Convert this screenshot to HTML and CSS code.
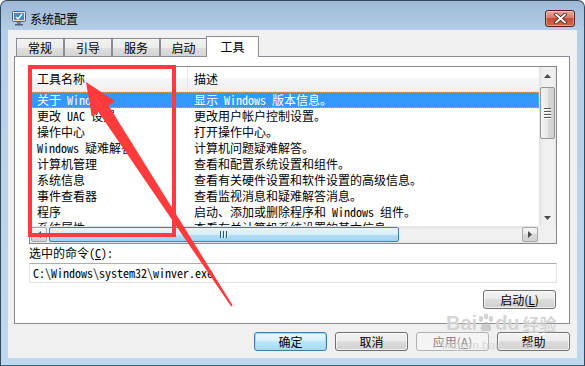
FILE: index.html
```html
<!DOCTYPE html>
<html lang="zh-CN">
<head>
    <meta charset="utf-8">
    <title>系统配置</title>
    <link rel="stylesheet" href="styles.css">
</head>
<body>
    <div class="window">
        <div class="titlebar">
            <svg class="app-icon" width="16" height="16" viewBox="0 0 16 16">
                <rect x="1.5" y="1.5" width="13" height="10" rx="1" fill="#dfe6ee" stroke="#55606c"/>
                <rect x="3" y="3" width="10" height="7" fill="#3b8fd6"/>
                <path d="M5 7l2 2 4-5" fill="none" stroke="#fff" stroke-width="1.3"/>
                <rect x="6" y="12" width="4" height="2" fill="#7b858f"/>
                <rect x="4" y="14" width="8" height="1.5" fill="#55606c"/>
            </svg>
            <span class="title">系统配置</span>
            <div class="close-btn">
                <svg width="13" height="11" viewBox="0 0 13 11">
                    <path d="M2 1.5l9 8M11 1.5l-9 8" stroke="#3c1510" stroke-width="3.6" stroke-linecap="round"/>
                    <path d="M2 1.5l9 8M11 1.5l-9 8" stroke="#fff" stroke-width="2" stroke-linecap="round"/>
                </svg>
            </div>
        </div>

        <div class="client">
            <div class="tabs">
                <div class="tab">常规</div>
                <div class="tab">引导</div>
                <div class="tab">服务</div>
                <div class="tab narrow">启动</div>
                <div class="tab active">工具</div>
            </div>

            <div class="panel">
                <div class="listview">
                    <div class="lv-content">
                        <div class="lv-header">
                            <div class="c1">工具名称</div>
                            <div class="c2">描述</div>
                        </div>
                        <div class="row selected"><div class="c1">关于 Windows</div><div class="c2">显示 Windows 版本信息。</div></div>
                        <div class="row"><div class="c1">更改 UAC 设置</div><div class="c2">更改用户帐户控制设置。</div></div>
                        <div class="row"><div class="c1">操作中心</div><div class="c2">打开操作中心。</div></div>
                        <div class="row"><div class="c1">Windows 疑难解答</div><div class="c2">计算机问题疑难解答。</div></div>
                        <div class="row"><div class="c1">计算机管理</div><div class="c2">查看和配置系统设置和组件。</div></div>
                        <div class="row"><div class="c1">系统信息</div><div class="c2">查看有关硬件设置和软件设置的高级信息。</div></div>
                        <div class="row"><div class="c1">事件查看器</div><div class="c2">查看监视消息和疑难解答消息。</div></div>
                        <div class="row"><div class="c1">程序</div><div class="c2">启动、添加或删除程序和 Windows 组件。</div></div>
                        <div class="row"><div class="c1">系统属性</div><div class="c2">查看有关计算机系统设置的基本信息。</div></div>
                    </div>

                    <div class="vscroll">
                        <div class="sb-btn">
                            <svg width="7" height="4" viewBox="0 0 7 4"><path d="M0 4L3.5 0 7 4z" fill="#4a4a4a"/></svg>
                        </div>
                        <div class="v-thumb">
                            <span></span><span></span><span></span><span></span>
                        </div>
                        <div class="sb-fill"></div>
                        <div class="sb-btn">
                            <svg width="7" height="4" viewBox="0 0 7 4"><path d="M0 0L3.5 4 7 0z" fill="#4a4a4a"/></svg>
                        </div>
                    </div>

                    <div class="hscroll">
                        <div class="sb-btn hot">
                            <svg width="4" height="7" viewBox="0 0 4 7"><path d="M4 0L0 3.5 4 7z" fill="#4a4a4a"/></svg>
                        </div>
                        <div class="h-thumb">
                            <span></span><span></span><span></span>
                        </div>
                        <div class="sb-fill"></div>
                        <div class="sb-btn hot">
                            <svg width="4" height="7" viewBox="0 0 4 7"><path d="M0 0L4 3.5 0 7z" fill="#4a4a4a"/></svg>
                        </div>
                    </div>

                    <div class="sb-corner"></div>
                </div>

                <div class="cmd-label">选中的命令(<u>C</u>):</div>
                <div class="cmd-box">C:\Windows\system32\winver.exe</div>
                <div class="launch-row">
                    <button type="button" class="btn">启动(<u>L</u>)</button>
                </div>
            </div>

            <div class="dialog-buttons">
                <button type="button" class="btn default">确定</button>
                <button type="button" class="btn">取消</button>
                <button type="button" class="btn" disabled>应用(<u>A</u>)</button>
                <button type="button" class="btn">帮助</button>
            </div>
        </div>
    </div>

    <!-- red markup drawn over the screenshot -->
    <svg class="annotation" width="585" height="366" viewBox="0 0 585 366">
        <rect x="30" y="67" width="144" height="168" fill="none" stroke="#ff3b3b" stroke-width="4"/>
        <polygon fill="#ff3b3b" points="86,82 115.2,101.2 108.5,105.5 232.8,305.5 231.2,306.5 98.5,112.1 91.8,116.4"/>
    </svg>

    <div class="watermark">
        <div class="wm-logo">
            <span>Bai</span>
            <svg width="18" height="20" viewBox="0 0 18 20">
                <ellipse cx="4" cy="6" rx="2.2" ry="3" fill="currentColor"/>
                <ellipse cx="9" cy="3.5" rx="2.2" ry="3" fill="currentColor"/>
                <ellipse cx="14" cy="6" rx="2.2" ry="3" fill="currentColor"/>
                <path d="M9 9c-4 0-6 5-5 8 1 2 3 1 5 1s4 1 5-1c1-3-1-8-5-8z" fill="currentColor"/>
            </svg>
            <span>du</span>
            <span class="wm-cn">经验</span>
        </div>
        <div class="wm-url">jingyan.baidu.com</div>
    </div>
</body>
</html>
```

FILE: styles.css
```css
body {
    margin: 0;
    width: 585px;
    height: 366px;
    overflow: hidden;
    position: relative;
    background: #fff;
    font-family: "Noto Sans Mono CJK SC", "Noto Sans CJK SC", sans-serif;
    font-size: 12px;
    color: #000;
}

.window {
    box-sizing: border-box;
    width: 585px;
    height: 366px;
    border: 1px solid #34495e;
    border-bottom-color: #1d6f84;
    border-radius: 7px 7px 0 0;
    background: linear-gradient(#9db9d6, #b5cee7 30px, #c0d8ee);
    padding-bottom: 7px;
    display: flex;
    flex-direction: column;
}

.titlebar {
    box-sizing: border-box;
    height: 29px;
    padding: 5px 9px 0 10px;
    display: flex;
    align-items: center;
    flex-shrink: 0;
}

.app-icon {
    margin-right: 3px;
}

.title {
    font-family: "Noto Sans CJK SC", sans-serif;
    font-size: 12px;
    color: #000;
}

.close-btn {
    box-sizing: border-box;
    margin-left: auto;
    width: 30px;
    height: 17px;
    border: 1px solid #5c2017;
    border-radius: 3px;
    background: linear-gradient(#e9a99b, #d7786a 45%, #c44d36 50%, #cf6a4c);
    box-shadow: inset 0 0 0 1px rgba(255, 255, 255, 0.35);
    display: flex;
    align-items: center;
    justify-content: center;
}

.client {
    flex: 1;
    margin: 0 7px;
    padding: 6px 7px 0 6px;
    background: #f0f0f0;
    display: flex;
    flex-direction: column;
}

/* tabs */
.tabs {
    display: flex;
    align-items: flex-end;
    height: 20px;
    padding-left: 2px;
    font-family: "Noto Sans CJK SC", sans-serif;
}

.tab {
    box-sizing: border-box;
    width: 48px;
    height: 18px;
    border: 1px solid #898c95;
    border-bottom: none;
    background: linear-gradient(#f3f3f3, #ebebeb 50%, #dfdfdf 50%, #d5d5d5);
    text-align: center;
    line-height: 17px;
}

.tab.narrow {
    width: 47px;
}

.tab.active {
    width: 53px;
    height: 21px;
    margin-left: -1px;
    margin-bottom: -1px;
    background: #fff;
    position: relative;
    z-index: 1;
    line-height: 19px;
}

.panel {
    box-sizing: border-box;
    height: 268px;
    border: 1px solid #898c95;
    background: #fff;
    padding: 9px 12px 0 14px;
}

/* list view */
.listview {
    box-sizing: border-box;
    width: 528px;
    height: 178px;
    border: 1px solid #828790;
    display: grid;
    grid-template-columns: 1fr 17px;
    grid-template-rows: 1fr 17px;
}

.lv-content {
    overflow: hidden;
    background: #fff;
}

.lv-header {
    box-sizing: border-box;
    display: flex;
    height: 25px;
    border-bottom: 1px solid #e3e5e8;
    background: linear-gradient(#fff, #fff 45%, #f5f6f7 46%, #f0f1f3);
    line-height: 24px;
}

.lv-header .c1 {
    border-right: 1px solid #e3e5e8;
}

.c1 {
    box-sizing: border-box;
    width: 158px;
    padding-left: 7px;
    overflow: hidden;
    white-space: nowrap;
    flex-shrink: 0;
}

.c2 {
    padding-left: 6px;
    white-space: nowrap;
}

.row {
    display: flex;
    height: 16px;
    line-height: 16px;
}

.row.selected {
    background: #3399ff;
    color: #fff;
    outline: 1px dotted #e0a050;
    outline-offset: -1px;
}

/* scroll bars */
.vscroll {
    display: flex;
    flex-direction: column;
    background: linear-gradient(90deg, #e3e3e3, #f0f0f0 25%, #f0f0f0 80%, #e7e7e7);
}

.hscroll {
    display: flex;
    background: linear-gradient(#e3e3e3, #f0f0f0 25%, #f0f0f0 80%, #e7e7e7);
}

.sb-btn {
    box-sizing: border-box;
    width: 17px;
    height: 17px;
    display: flex;
    align-items: center;
    justify-content: center;
    flex-shrink: 0;
}

.sb-btn.hot {
    width: 16px;
    height: 15px;
    margin: 1px;
    border: 1px solid #a7a7a7;
    border-radius: 2px;
    background: linear-gradient(#f6f6f6, #e8e8e8 50%, #d9d9d9 50%, #d1d1d1);
}

.sb-fill {
    flex: 1;
}

.v-thumb {
    box-sizing: border-box;
    height: 52px;
    margin: 3px 1px 0 1px;
    border: 1px solid #969696;
    border-radius: 2px;
    background: linear-gradient(90deg, #f4f4f4, #e9e9e9 50%, #d9d9d9 51%, #cfcfcf);
    display: flex;
    flex-direction: column;
    align-items: center;
    justify-content: center;
    gap: 1px;
}

.v-thumb span {
    width: 7px;
    height: 1px;
    background: #5a5a5a;
    border-bottom: 1px solid #fff;
}

.h-thumb {
    box-sizing: border-box;
    width: 350px;
    height: 15px;
    margin: 1px 0 0 1px;
    border: 1px solid #3c7fb1;
    border-radius: 2px;
    background: linear-gradient(#e6f5fd, #d5eefb 50%, #b3def6 51%, #9fd3f2);
    display: flex;
    align-items: center;
    justify-content: center;
    gap: 1px;
}

.h-thumb span {
    width: 1px;
    height: 7px;
    background: #1e5a88;
    border-right: 1px solid #e8f6fe;
}

.sb-corner {
    background: #f0f0f0;
}

/* command line */
.cmd-label {
    margin-top: 1px;
    line-height: 16px;
}

.cmd-box {
    box-sizing: border-box;
    width: 528px;
    height: 20px;
    margin-top: 2px;
    border: 1px solid #dde1e6;
    border-top-color: #abadb3;
    padding-left: 3px;
    line-height: 18px;
    white-space: nowrap;
}

.launch-row {
    display: flex;
    justify-content: flex-end;
    width: 527px;
    margin-top: 7px;
}

/* buttons */
.btn {
    box-sizing: border-box;
    width: 73px;
    height: 19px;
    padding: 0;
    border: 1px solid #707070;
    border-radius: 3px;
    background: linear-gradient(#f2f2f2, #ebebeb 45%, #dddddd 50%, #cfcfcf);
    box-shadow: inset 0 0 0 1px rgba(255, 255, 255, 0.7);
    font-family: "Noto Sans CJK SC", sans-serif;
    font-size: 12px;
    line-height: 16px;
    color: #000;
}

.btn.default {
    border-color: #3c7fb1;
    background: linear-gradient(#eaf6fd, #d9f0fc 45%, #bee6fd 50%, #a7d9f5);
    box-shadow: inset 0 0 0 1px #97dcfa;
}

.btn:disabled {
    border-color: #adb2b5;
    background: #f4f4f4;
    box-shadow: none;
    color: #838383;
}

.dialog-buttons {
    display: flex;
    justify-content: flex-end;
    gap: 8px;
    margin-top: 8px;
}

/* overlays */
.annotation {
    position: absolute;
    left: 0;
    top: 0;
}

.watermark {
    position: absolute;
    left: 446px;
    top: 311px;
    color: rgba(175, 175, 175, 0.55);
    text-shadow: 0 0 1px rgba(255, 255, 255, 0.9);
    font-family: "Liberation Sans", sans-serif;
}

.wm-logo {
    display: flex;
    align-items: center;
    font-size: 20px;
    font-weight: bold;
    height: 24px;
}

.wm-cn {
    font-family: "Noto Sans CJK SC", sans-serif;
    font-size: 17px;
    margin-left: 3px;
}

.wm-url {
    font-size: 11px;
    margin-top: 4px;
    margin-left: -4px;
    letter-spacing: 0.3px;
}
```
